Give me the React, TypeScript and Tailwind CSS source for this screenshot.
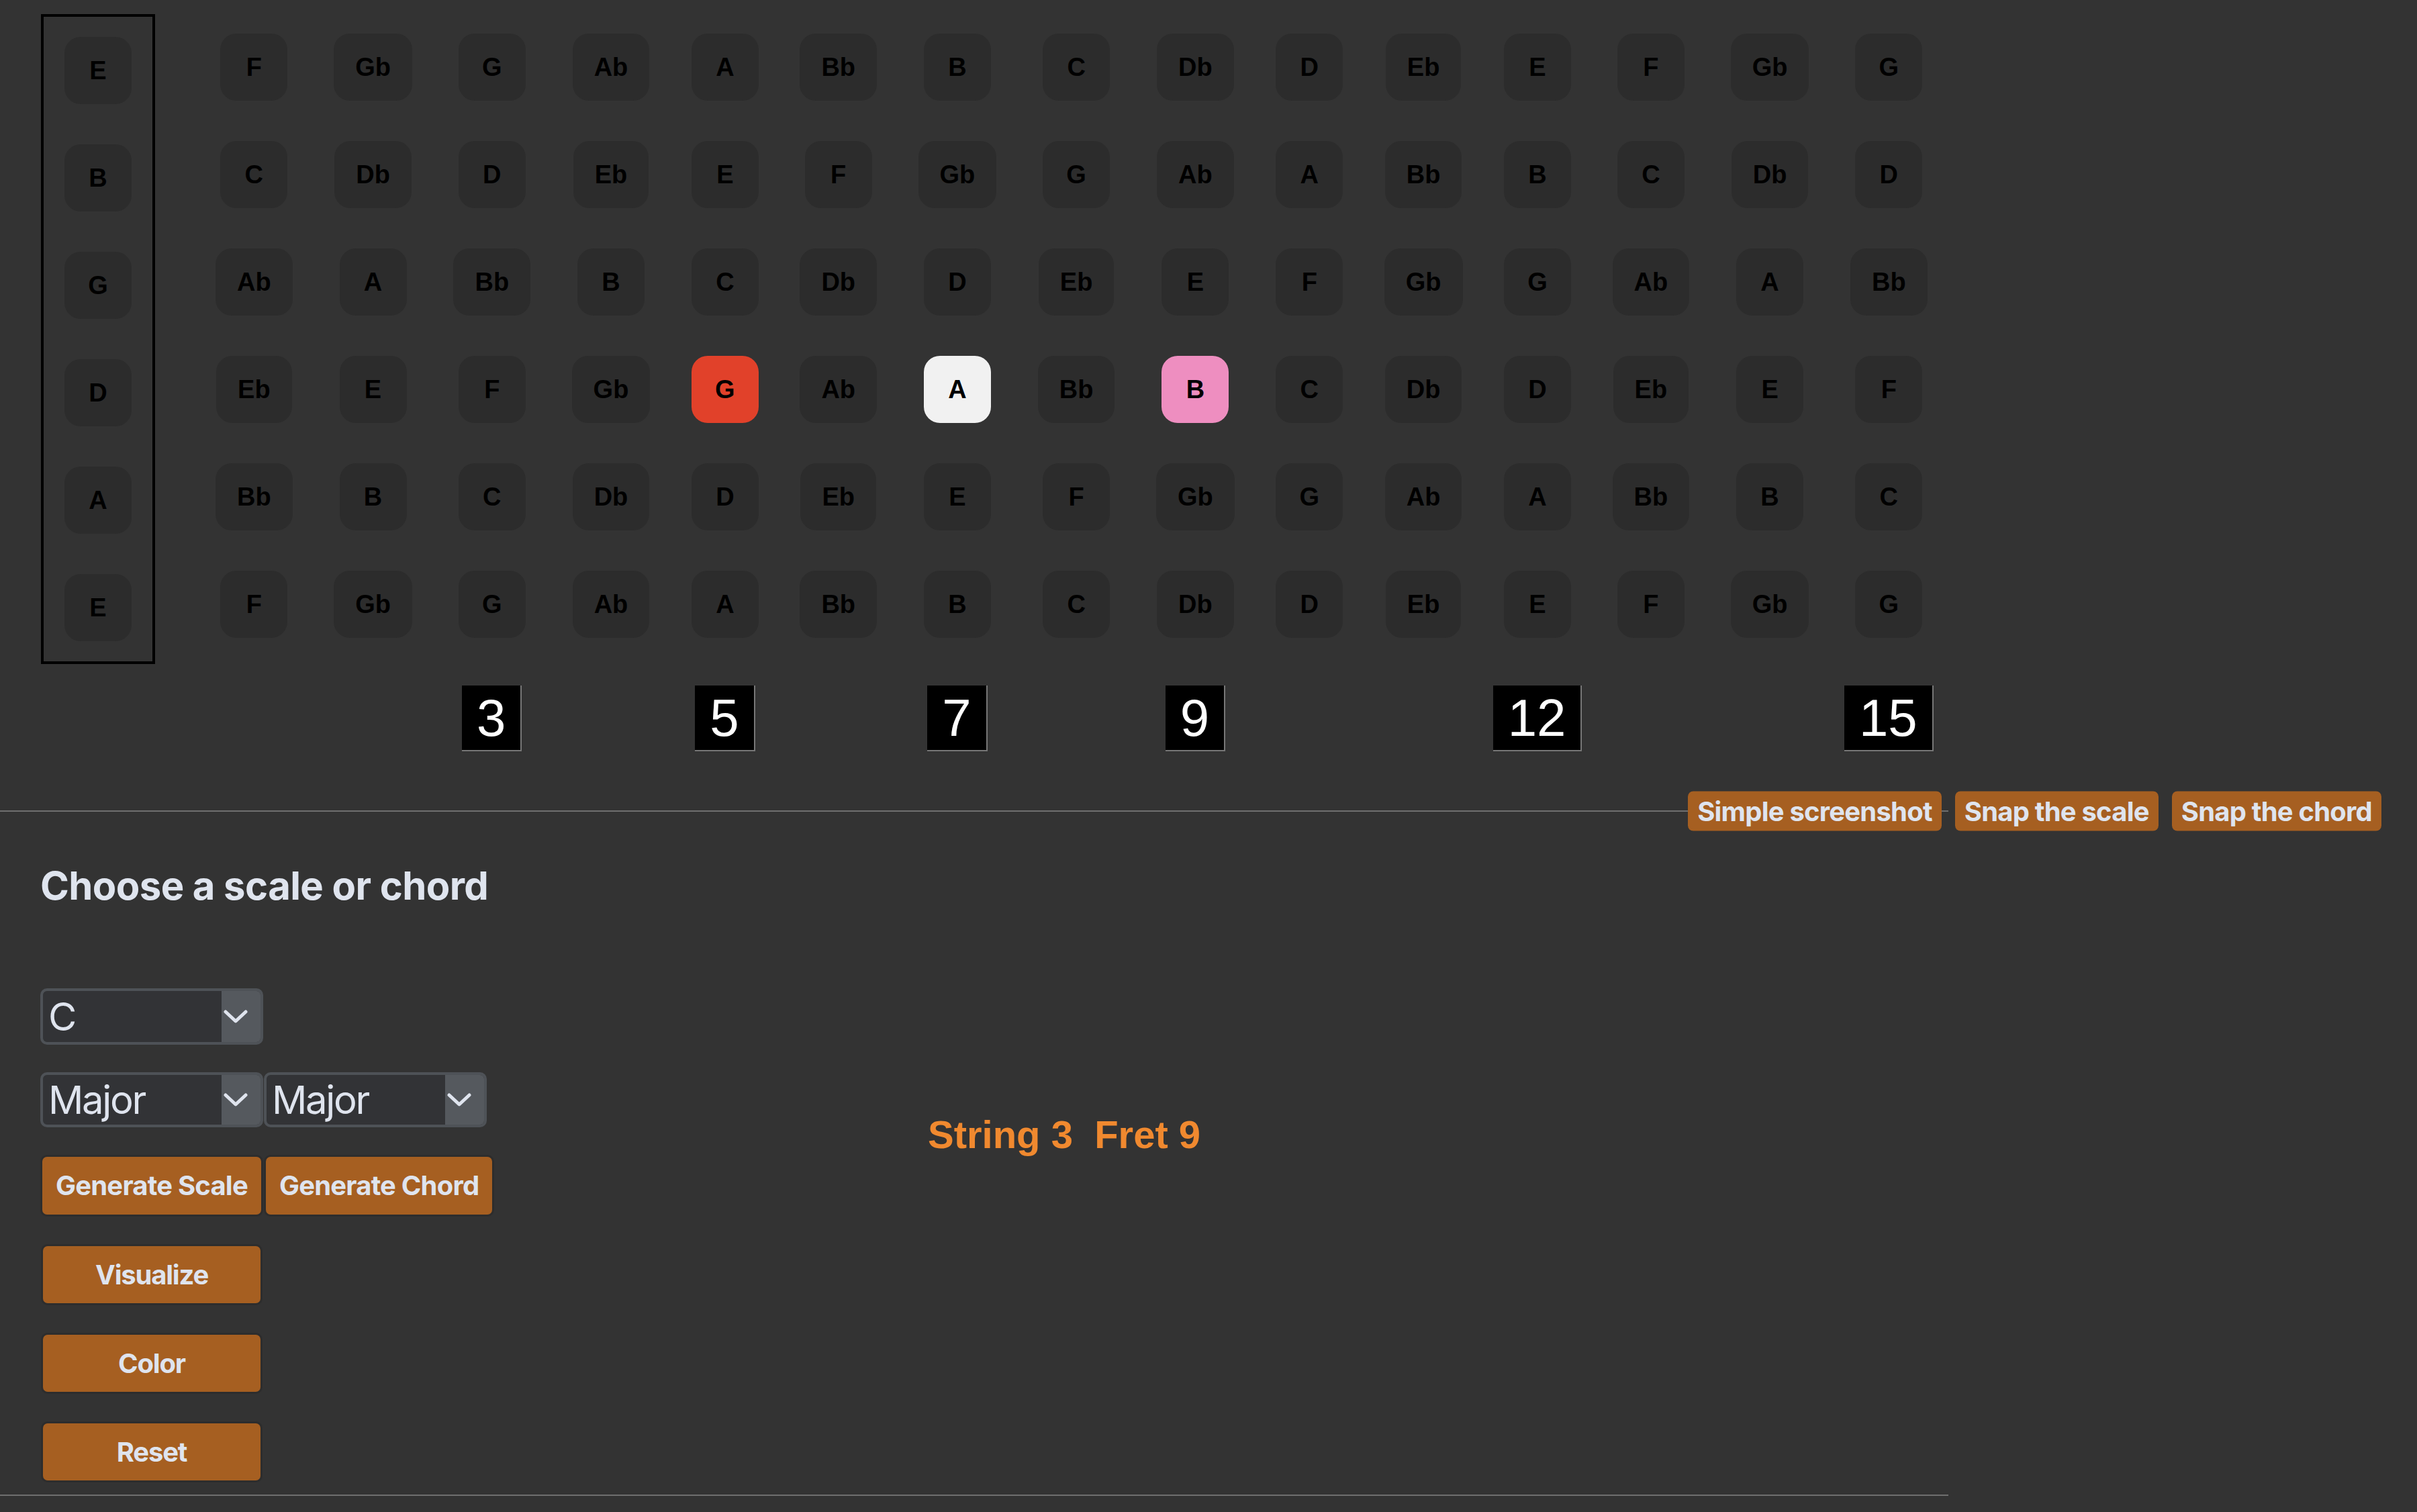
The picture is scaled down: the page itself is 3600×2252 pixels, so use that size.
import { useState } from 'react'

const NOTES = ['C', 'Db', 'D', 'Eb', 'E', 'F', 'Gb', 'G', 'Ab', 'A', 'Bb', 'B']
const STRINGS = ['E', 'B', 'G', 'D', 'A', 'E']
const FRETS = Array.from({ length: 15 }, (_, i) => i + 1)
const MARKERS = [3, 5, 7, 9, 12, 15]

// string index - fret -> colour of the highlighted note
const HIGHLIGHT: Record<string, string> = {
  '3-5': 'bg-[#e1412a]',
  '3-7': 'bg-[#f1f1f1]',
  '3-9': 'bg-[#ee8ec0]',
}

function noteAt(open: string, fret: number) {
  return NOTES[(NOTES.indexOf(open) + fret) % 12]
}

function Note({ name, color }: { name: string; color?: string }) {
  return (
    <div
      className={`flex h-[100px] min-w-[100px] items-center justify-center rounded-[24px] px-[32px] font-['Liberation_Sans',Arial,sans-serif] text-[38px] leading-none font-bold text-black ${color ?? 'bg-[#2c2c2c]'}`}
    >
      {name}
    </div>
  )
}

function Chevron() {
  return (
    <svg width="36" height="20" viewBox="0 0 36 20" fill="none">
      <path d="M3 3 L18 17 L33 3" stroke="#dfe4ee" strokeWidth="5" strokeLinecap="round" strokeLinejoin="round" />
    </svg>
  )
}

function Select({ value, className = '' }: { value: string; className?: string }) {
  return (
    <div className={`flex w-[332px] overflow-hidden rounded-[10px] border-4 border-[#4e5257] bg-[#323336] ${className}`}>
      <div className="flex flex-1 items-center pl-[8px] font-['Inter',sans-serif] text-[58px] leading-none tracking-[-0.04em] text-[#dfe4ee]">
        {value}
      </div>
      <div className="flex w-[58px] items-center bg-[#55595e] pl-[3px]">
        <Chevron />
      </div>
    </div>
  )
}

const btn =
  "flex items-center justify-center whitespace-nowrap rounded-[10px] border-[3px] border-[#2d2d2d] bg-[#a65f21] font-['Inter',sans-serif] text-[40px] leading-none font-bold text-[#dfe4ee]"

export default function App() {
  const [root] = useState('C')

  return (
    <div className="min-h-screen w-full bg-[#333333]">
      {/* Fretboard */}
      <div className="flex items-start pt-[21px] pl-[61px]">
        <div className="flex flex-col gap-[60px] border-4 border-black px-[31px] py-[30px]">
          {STRINGS.map((s, i) => (
            <Note key={i} name={s} />
          ))}
        </div>
        <div className="mt-[29px] ml-[90px] flex items-start gap-[61.5px]">
          {FRETS.map(f => (
            <div key={f} className="flex flex-col items-center gap-[60px]">
              {STRINGS.map((s, i) => (
                <Note key={i} name={noteAt(s, f)} color={HIGHLIGHT[`${i}-${f}`]} />
              ))}
              {MARKERS.includes(f) && (
                <div className="mt-[11px] flex h-[98px] w-0 justify-center">
                  <div className="flex h-[98px] shrink-0 items-center border-r-2 border-b-2 border-[#777777] bg-black px-[22px] font-['Liberation_Sans',Arial,sans-serif] text-[78px] leading-none text-white">
                    {f}
                  </div>
                </div>
              )}
            </div>
          ))}
        </div>
      </div>

      {/* Divider + snapshot buttons */}
      <div className="relative mt-[88px] h-[2px] w-full">
        <div className="h-[2px] w-[2902px] bg-[#6f6f6f]" />
        <div className="absolute top-1/2 right-[53px] flex -translate-y-1/2 gap-[20px]">
          {['Simple screenshot', 'Snap the scale', 'Snap the chord'].map(label => (
            <button
              key={label}
              className="flex h-[59px] items-center rounded-[8px] bg-[#a65f21] px-[14px] font-['Inter',sans-serif] text-[40px] leading-none font-bold tracking-[-0.02em] whitespace-nowrap text-[#dfe4ee]"
            >
              {label}
            </button>
          ))}
        </div>
      </div>

      {/* Controls */}
      <div className="pl-[60px]">
        <h2 className="mt-[81px] font-['Inter',sans-serif] text-[58px] leading-none font-bold tracking-[-0.01em] text-[#dfe4ee]">
          Choose a scale or chord
        </h2>
        <div className="flex items-start">
          <div className="mt-[124px] flex w-[670px] shrink-0 flex-col items-start gap-[41px]">
            <Select value={root} className="h-[84px]" />
            <div className="flex gap-[1px]">
              <Select value="Major" className="h-[82px]" />
              <Select value="Major" className="h-[82px]" />
            </div>
            <div className="flex gap-[1px]">
              <button className={`${btn} h-[92px] px-[20px] tracking-[-0.02em]`}>Generate Scale</button>
              <button className={`${btn} h-[92px] px-[20px] tracking-[-0.02em]`}>Generate Chord</button>
            </div>
            <button className={`${btn} ml-[1px] h-[91px] w-[330px] tracking-[-0.03em]`}>Visualize</button>
            <button className={`${btn} ml-[1px] h-[91px] w-[330px] tracking-[-0.03em]`}>Color</button>
            <button className={`${btn} ml-[1px] h-[91px] w-[330px] tracking-[-0.03em]`}>Reset</button>
          </div>
          <div className="mt-[313px] ml-[652px] font-['Liberation_Sans',Arial,sans-serif] text-[58px] leading-none font-bold whitespace-pre text-[#f0892f]">
            {'String 3  Fret 9'}
          </div>
        </div>
      </div>
      <div className="mt-[18px] h-[2px] w-[2902px] bg-[#6f6f6f]" />
    </div>
  )
}
